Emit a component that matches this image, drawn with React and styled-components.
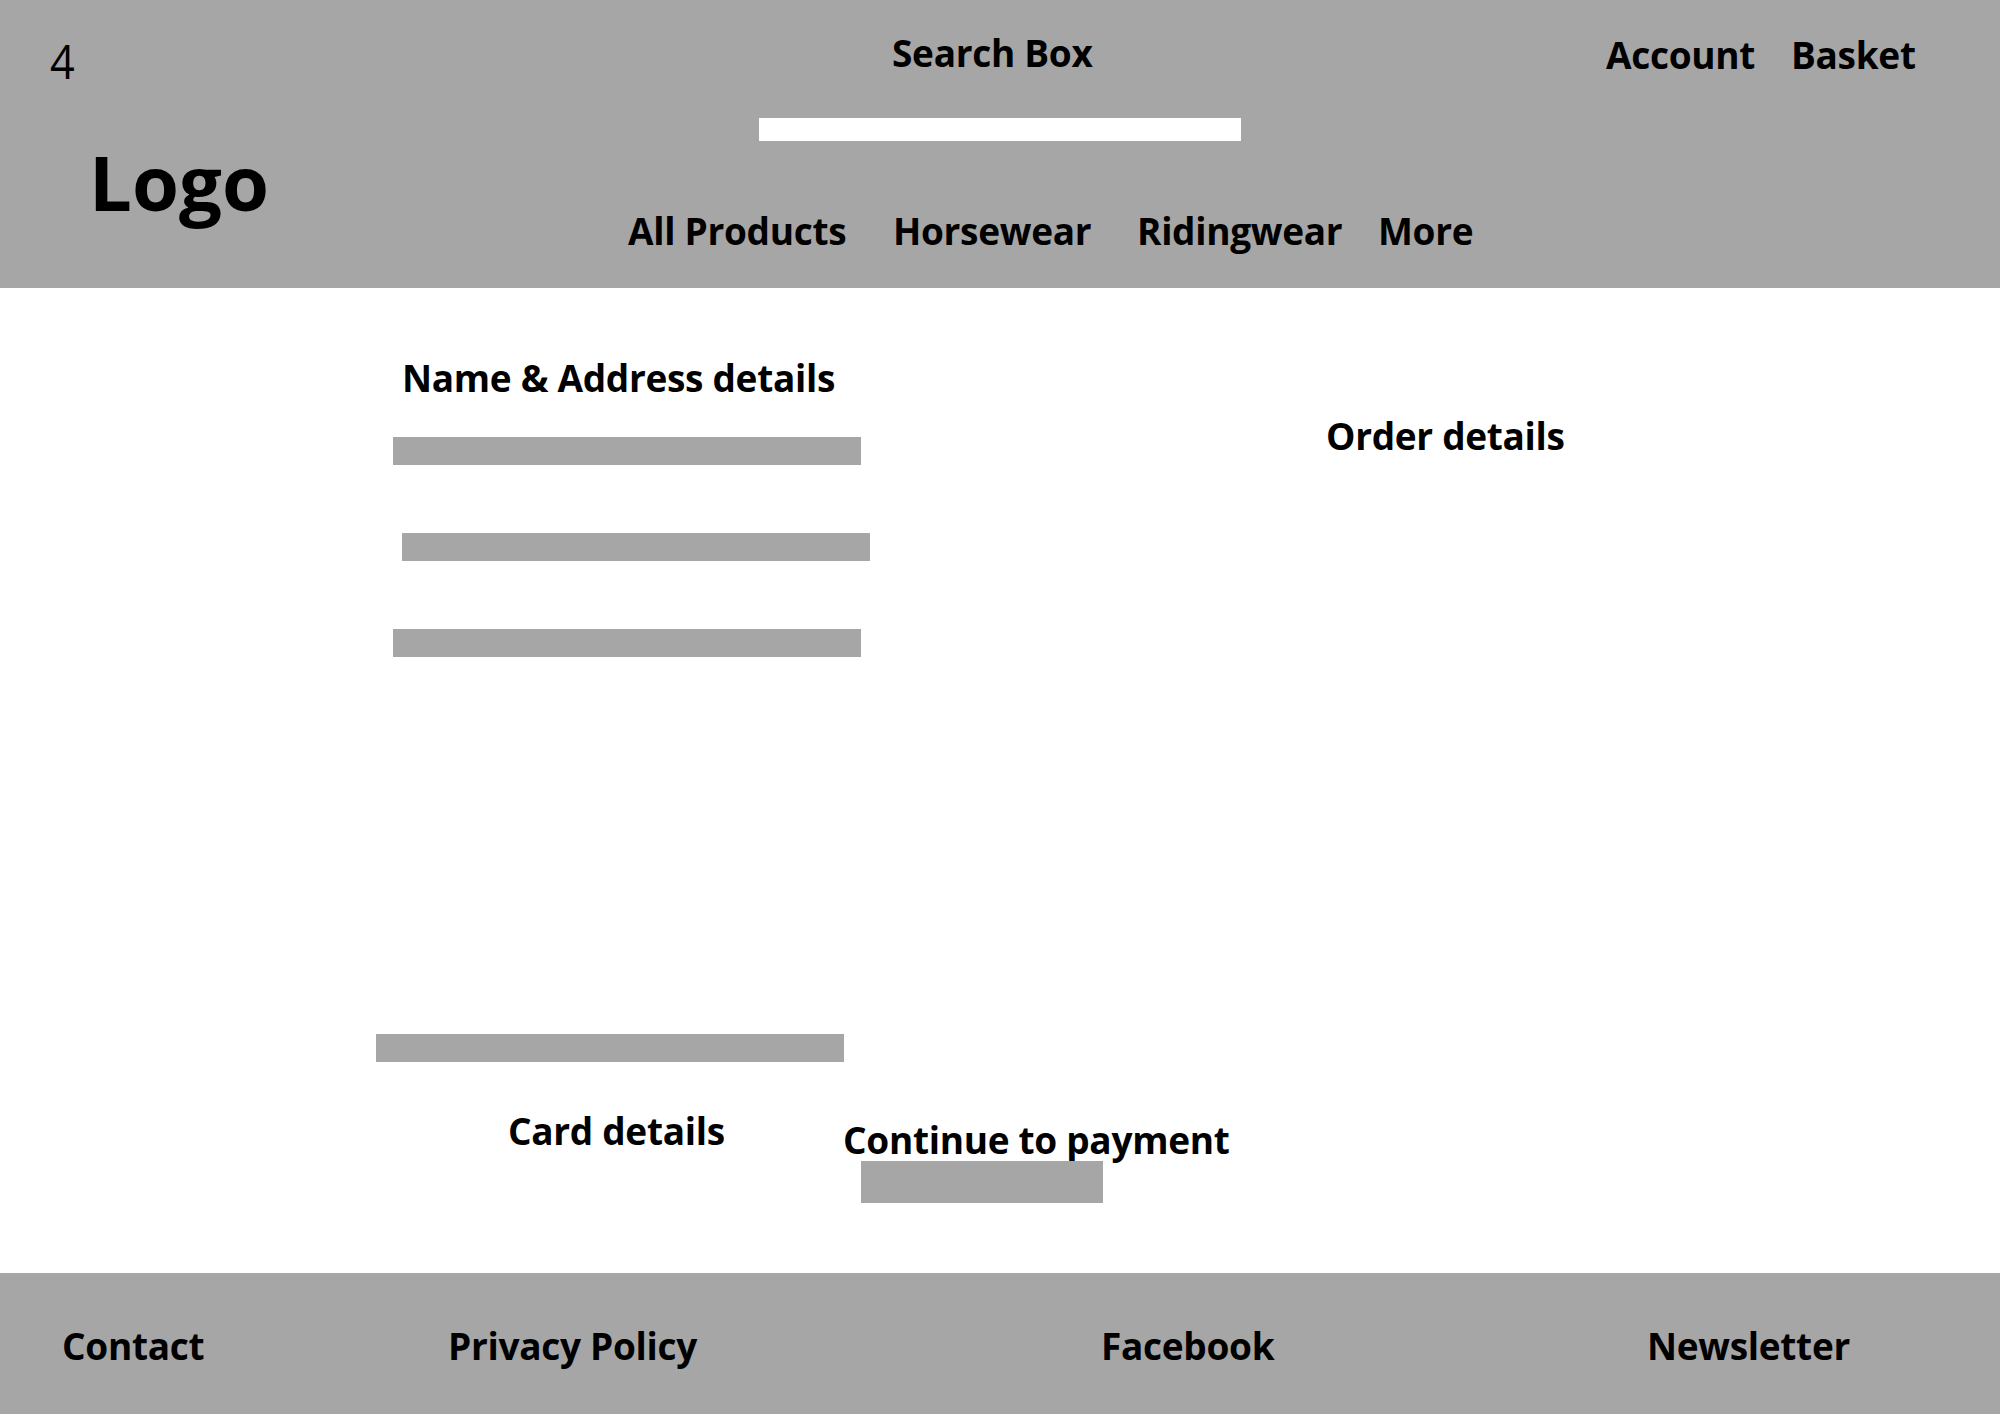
import React from 'react';
import styled, { createGlobalStyle } from 'styled-components';

const Colors = {
    grey: '#a6a6a6',
    white: '#ffffff',
    black: '#000000',
};

const GlobalStyle = createGlobalStyle`
    html, body {
        margin: 0;
        padding: 0;
        background-color: ${Colors.white};
        overflow: hidden;
    }
    body {
        font-family: "Open Sans", "Noto Sans", "Liberation Sans", sans-serif;
        color: ${Colors.black};
    }
`;

const Page = styled.div`
    width: 2000px;
    height: 1414px;
    display: flex;
    flex-direction: column;
    overflow: hidden;
`;

const Label = styled.div`
    font-size: 37px;
    font-weight: 700;
    line-height: 1;
    letter-spacing: -0.3px;
    white-space: nowrap;
`;

/* header */

const Header = styled.header`
    flex: 0 0 288px;
    display: flex;
    background-color: ${Colors.grey};
`;

const HeaderLeft = styled.div`
    width: 560px;
    display: flex;
    flex-direction: column;
    align-items: flex-start;
    padding: 37px 0 0 50px;
    box-sizing: border-box;
`;

const PageNumber = styled(Label)`
    font-size: 48px;
    font-weight: 400;
    letter-spacing: 0;
    transform: scaleX(0.9);
    transform-origin: left center;
`;

const Logo = styled(Label)`
    font-size: 76px;
    letter-spacing: 0;
    margin: 59px 0 0 39px;
`;

const HeaderCenter = styled.div`
    width: 1000px;
    display: flex;
    flex-direction: column;
    align-items: flex-start;
`;

const SearchLabel = styled(Label)`
    margin: 34px 0 0 332px;
`;

const SearchInput = styled.div`
    width: 482px;
    height: 23px;
    margin: 47px 0 0 199px;
    background-color: ${Colors.white};
`;

const Nav = styled.nav`
    display: grid;
    grid-template-columns: 265px 244px 241px auto;
    margin: 71px 0 0 68px;
`;

const HeaderRight = styled.div`
    flex: 1;
    padding: 36px 0 0 46px;
`;

const UserLinks = styled.div`
    display: grid;
    grid-template-columns: 185px auto;
`;

/* main */

const Main = styled.main`
    flex: 0 0 985px;
    display: flex;
    padding-left: 376px;
    box-sizing: border-box;
`;

const FormColumn = styled.section`
    width: 950px;
    display: flex;
    flex-direction: column;
    align-items: flex-start;
    padding-top: 71px;
`;

const FormTitle = styled(Label)`
    margin-left: 26px;
`;

const Field = styled.div`
    width: 468px;
    height: 28px;
    margin-top: ${(p) => p.gap}px;
    margin-left: ${(p) => p.indent}px;
    background-color: ${Colors.grey};
`;

const FormFooter = styled.div`
    display: grid;
    grid-template-columns: 467px auto;
    align-items: start;
`;

const CardLabel = styled(Label)`
    margin: 50px 0 0 132px;
`;

const PaymentBlock = styled.div`
    display: flex;
    flex-direction: column;
    align-items: flex-start;
    padding-top: 59px;
`;

const PayButton = styled.div`
    width: 242px;
    height: 42px;
    margin: 3px 0 0 18px;
    background-color: ${Colors.grey};
`;

const OrderColumn = styled.section`
    flex: 1;
    padding-top: 129px;
`;

/* footer */

const Footer = styled.footer`
    flex: 1 0 auto;
    display: grid;
    grid-template-columns: 386px 653px 546px auto;
    align-items: start;
    padding: 54px 0 0 62px;
    background-color: ${Colors.grey};
`;

const App = () => (
    <Page>
        <GlobalStyle />
        <Header>
            <HeaderLeft>
                <PageNumber>4</PageNumber>
                <Logo>Logo</Logo>
            </HeaderLeft>
            <HeaderCenter>
                <SearchLabel>Search Box</SearchLabel>
                <SearchInput />
                <Nav>
                    <Label>All Products</Label>
                    <Label>Horsewear</Label>
                    <Label>Ridingwear</Label>
                    <Label>More</Label>
                </Nav>
            </HeaderCenter>
            <HeaderRight>
                <UserLinks>
                    <Label>Account</Label>
                    <Label>Basket</Label>
                </UserLinks>
            </HeaderRight>
        </Header>
        <Main>
            <FormColumn>
                <FormTitle>Name &amp; Address details</FormTitle>
                <Field gap={41} indent={17} />
                <Field gap={68} indent={26} />
                <Field gap={68} indent={17} />
                <Field gap={377} indent={0} />
                <FormFooter>
                    <CardLabel>Card details</CardLabel>
                    <PaymentBlock>
                        <Label>Continue to payment</Label>
                        <PayButton />
                    </PaymentBlock>
                </FormFooter>
            </FormColumn>
            <OrderColumn>
                <Label>Order details</Label>
            </OrderColumn>
        </Main>
        <Footer>
            <Label>Contact</Label>
            <Label>Privacy Policy</Label>
            <Label>Facebook</Label>
            <Label>Newsletter</Label>
        </Footer>
    </Page>
);

export default App;
